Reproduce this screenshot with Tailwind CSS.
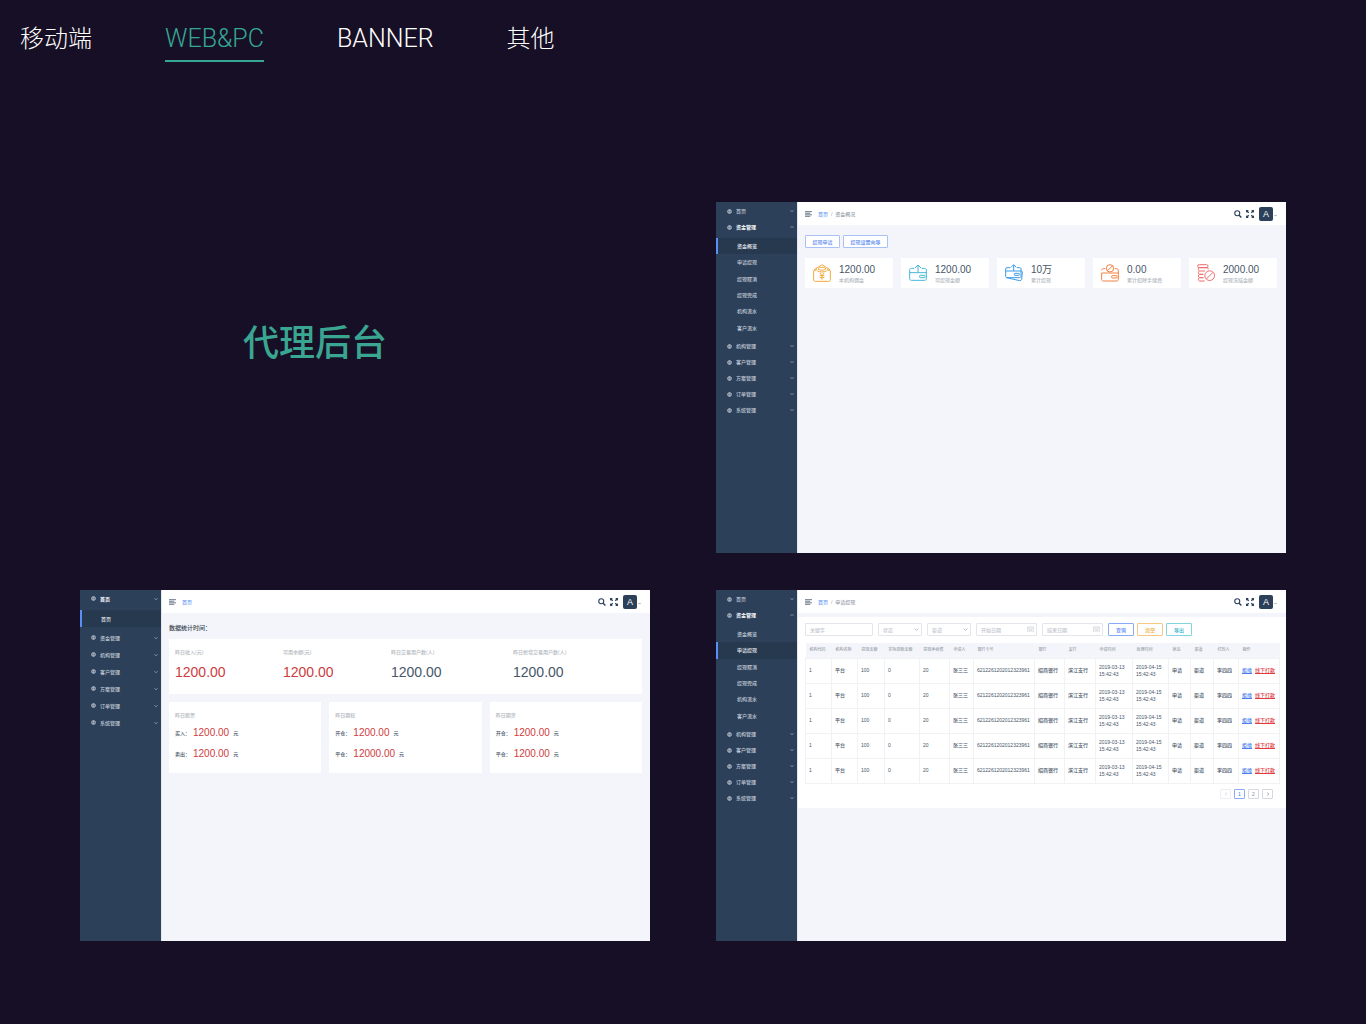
<!DOCTYPE html>
<html lang="zh-CN">
<head>
<meta charset="utf-8">
<meta name="viewport" content="width=device-width, initial-scale=1">
<title>代理后台</title>
<script src="https://cdn.jsdelivr.net/npm/@tailwindcss/browser@4"></script>
</head>
<body class="min-h-screen bg-[#170f25] font-['Liberation_Sans','Noto_Sans_CJK_SC',sans-serif] text-[#475669]">

<svg class="hidden" aria-hidden="true">
  <symbol id="i-globe" viewBox="0 0 10 10"><circle cx="5" cy="5" r="4" fill="#fff" fill-opacity=".25" stroke="currentColor" stroke-width="1.2"/><path d="M5 1v8M1.4 3.4h7.2M1.4 6.6h7.2" fill="none" stroke="currentColor" stroke-width=".8"/></symbol>
  <symbol id="i-down" viewBox="0 0 8 8"><path d="M1 2.5 4 5.5 7 2.5" fill="none" stroke="currentColor" stroke-width="1.6"/></symbol>
  <symbol id="i-up" viewBox="0 0 8 8"><path d="M1 5.5 4 2.5 7 5.5" fill="none" stroke="currentColor" stroke-width="1.6"/></symbol>
  <symbol id="i-menu" viewBox="0 0 12 10"><path d="M0 1h12M0 3.7h9M0 6.4h12M0 9h9" fill="none" stroke="currentColor" stroke-width="1.5"/></symbol>
  <symbol id="i-search" viewBox="0 0 16 16"><circle cx="6.500" cy="6.500" r="5" fill="none" stroke="currentColor" stroke-width="2.2"/><path d="m10.3 10.3 4.5 4.5" stroke="currentColor" stroke-width="2.8"/></symbol>
  <symbol id="i-full" viewBox="0 0 16 16"><path d="M0 0h5.5L3.8 1.9 6.4 4.5 4.5 6.4 1.9 3.8 0 5.5zM16 0h-5.5l1.7 1.9-2.6 2.6 1.9 1.9 2.6-2.6L16 5.5zM0 16h5.5l-1.7-1.9 2.6-2.6-1.9-1.9-2.6 2.6L0 10.5zM16 16h-5.5l1.7-1.9-2.6-2.6 1.9-1.9 2.6 2.6 1.9-1.7z" fill="currentColor"/></symbol>
  <symbol id="i-cal" viewBox="0 0 14 12"><path d="M1 2h12v9.5H1zM1 4.5h12M4 .5v2M10 .5v2M3 7h8M3 9h8" fill="none" stroke="currentColor" stroke-width=".8"/></symbol>
  <symbol id="i-envelope" viewBox="0 0 54 54"><g fill="none" stroke="currentColor" stroke-width="3"><path d="M10 19H4c-1.500 0-2 1-2 2v26c0 3 2 5 5 5h40c3 0 5-2 5-5V21c0-1-.5-2-2-2h-6"/><path d="m3 18 8-7M51 18l-8-7M10 19v-3c0-2 1-4 3-5l11-7c2-1.500 4-1.500 6 0l11 7c2 1 3 3 3 5v3"/><path d="M15 15c4-7 20-7 24 0M13 21c7 4 21 4 28 0M15 15c6 5 18 5 24 0"/><path d="m21 27 6 8 6-8M20 35h14M20 41h14M27 35v12"/></g></symbol>
  <symbol id="i-cardup" viewBox="0 0 54 54"><g fill="none" stroke="currentColor" stroke-width="3"><path d="M16 13H7c-3 0-5 2-5 5v26c0 3 2 5 5 5h40c3 0 5-2 5-5V18c0-3-2-5-5-5h-9M2 26h50M27 25V4M18 12l9-9 9 9"/><rect x="32" y="34" width="16" height="7" rx="2"/></g></symbol>
  <symbol id="i-cards" viewBox="0 0 54 54"><g fill="none" stroke="currentColor" stroke-width="3"><path d="M16 11H6c-2.500 0-4 2-4 4v22c0 3 2 4 4 4h37c3 0 5-2 5-4V15c0-3-2-4-5-4h-7M2 21h46M26 21V3M18 10l8-8 8 8M4 41l40 9c3 .5 5-1 6-3l2-24-4-3"/><rect x="28" y="28" width="15" height="6" rx="2"/></g></symbol>
  <symbol id="i-cardban" viewBox="0 0 54 54"><g fill="none" stroke="currentColor" stroke-width="3"><path d="M13 14H7c-3 0-5 2-5 5M2 27v19c0 3 2 5 5 5h40c3 0 5-2 5-5V19c0-3-2-5-5-5h-6M2 27h50"/><circle cx="27" cy="13" r="11"/><path d="m20 20 15-15"/><rect x="32" y="35" width="16" height="7" rx="2"/></g></symbol>
  <symbol id="i-coinsban" viewBox="0 0 54 54"><g fill="none" stroke="currentColor" stroke-width="3"><rect x="2" y="2" width="31" height="9" rx="4.500"/><path d="M30 11c3 1 4 3 4 5M7 11c-4 2-4 8 0 10h17M7 21c-4 2-4 8 0 10h12M7 31c-4 2-4 8 0 10h12M7 41c-4 1-4 9 0 10h16M7 11h24M7 31h12M7 41h12"/><circle cx="38" cy="35" r="14.500"/><path d="m28 45 20-20"/></g></symbol>
</svg>

<nav class="flex gap-[73px] px-5 pt-[21px] text-[24px] leading-9 font-light text-white font-['Roboto','Noto_Sans_CJK_SC',sans-serif]">
  <a href="#" class="pb-[3px]">移动端</a>
  <a href="#" class="border-b-2 border-[#35a794] pb-[3px] text-[25px] text-[#35a794]">WEB&amp;PC</a>
  <a href="#" class="pb-[3px] text-[25px]">BANNER</a>
  <a href="#" class="pb-[3px]">其他</a>
</nav>

<main class="grid grid-cols-2 gap-x-[66px] gap-y-[37px] px-20 pt-[140px] pb-20 text-[5px] leading-[8px] font-medium">
  <h1 class="pt-[122px] pl-[163px] text-[36px] leading-10 font-medium text-[#3aa692]">代理后台</h1>

  <!-- 资金概况 -->
  <section class="flex min-h-[351px] bg-[#f4f5fa]">
    <aside data-menu="资金管理" data-active="资金概览" class="w-[81px] shrink-0 bg-[#2c405a] pt-px text-[#c3cbd6]"></aside>
    <div class="min-w-0 flex-1 border-l border-[#e3e7ef]">
      <header data-crumb="资金概况" class="flex h-[23px] items-center bg-white pr-[9px] pl-[7px]"></header>
      <div class="pt-[10px] pr-[9px] pl-[7px]">
        <div class="flex gap-[3px]">
          <button class="h-[13px] w-[35px] rounded-[1px] border border-[#a9c1f5] bg-white text-[#5b8bf0]">提现申请</button>
          <button class="h-[13px] w-[45px] rounded-[1px] border border-[#a9c1f5] bg-white text-[#5b8bf0]">提现设置向导</button>
        </div>
        <div class="mt-[10px] grid grid-cols-5 gap-2">
          <div class="flex h-[30px] items-center gap-2 bg-white pl-2"><svg class="size-[18px] text-[#efa93c]"><use href="#i-envelope"/></svg><div><p class="pt-[2px] text-[10px] leading-[12px]">1200.00</p><p class="text-[#b3b8c0]">本机构佣金</p></div></div>
          <div class="flex h-[30px] items-center gap-2 bg-white pl-2"><svg class="size-[18px] text-[#45b8d6]"><use href="#i-cardup"/></svg><div><p class="pt-[2px] text-[10px] leading-[12px]">1200.00</p><p class="text-[#b3b8c0]">可提现金额</p></div></div>
          <div class="flex h-[30px] items-center gap-2 bg-white pl-2"><svg class="size-[18px] text-[#3c9be8]"><use href="#i-cards"/></svg><div><p class="pt-[2px] text-[10px] leading-[12px] font-normal">10万</p><p class="text-[#b3b8c0]">累计提现</p></div></div>
          <div class="flex h-[30px] items-center gap-2 bg-white pl-2"><svg class="size-[18px] text-[#f08142]"><use href="#i-cardban"/></svg><div><p class="pt-[2px] text-[10px] leading-[12px]">0.00</p><p class="text-[#b3b8c0]">累计扣除手续费</p></div></div>
          <div class="flex h-[30px] items-center gap-2 bg-white pl-2"><svg class="size-[18px] text-[#f26d6d]"><use href="#i-coinsban"/></svg><div><p class="pt-[2px] text-[10px] leading-[12px]">2000.00</p><p class="text-[#b3b8c0]">提现冻结金额</p></div></div>
        </div>
      </div>
    </div>
  </section>

  <!-- 首页 -->
  <section class="flex min-h-[351px] bg-[#f4f5fa]">
    <aside data-menu="首页" data-active="首页" class="w-[81px] shrink-0 bg-[#2c405a] text-[#c3cbd6]"></aside>
    <div class="min-w-0 flex-1 border-l border-[#e3e7ef]">
      <header data-crumb="" class="flex h-[23px] items-center bg-white pr-[9px] pl-[7px]"></header>
      <div class="pt-[10px] pr-2 pl-[7px]">
        <h2 class="text-[6px] leading-[10px] text-[#333f4d]">数据统计时间：</h2>
        <div class="mt-[6px] grid h-[55px] grid-cols-[108px_108px_122px_1fr] bg-white pt-[9px] pl-[6px]">
          <div><p class="text-[#b3b8c0]">昨日收入(元)</p><p class="pt-2 text-[14px] leading-4 text-[#cf3c40]">1200.00</p></div>
          <div><p class="text-[#b3b8c0]">可用余额(元)</p><p class="pt-2 text-[14px] leading-4 text-[#cf3c40]">1200.00</p></div>
          <div><p class="text-[#b3b8c0]">昨日交易用户数(人)</p><p class="pt-2 text-[14px] leading-4">1200.00</p></div>
          <div><p class="text-[#b3b8c0]">昨日新增交易用户数(人)</p><p class="pt-2 text-[14px] leading-4">1200.00</p></div>
        </div>
        <div class="mt-2 grid grid-cols-3 gap-2">
          <div class="h-[71px] bg-white pt-[9px] pl-[6px]"><p class="pb-[7px] text-[#b3b8c0]">昨日股票</p>
            <p class="flex items-center leading-[14px]"><span class="w-[18px]">买入：</span><b class="text-[10px] font-normal text-[#cf3c40]">1200.00</b><span class="pl-1">元</span></p>
            <p class="flex items-center pt-[7px] leading-[14px]"><span class="w-[18px]">卖出：</span><b class="text-[10px] font-normal text-[#cf3c40]">1200.00</b><span class="pl-1">元</span></p></div>
          <div class="h-[71px] bg-white pt-[9px] pl-[6px]"><p class="pb-[7px] text-[#b3b8c0]">昨日期权</p>
            <p class="flex items-center leading-[14px]"><span class="w-[18px]">开仓：</span><b class="text-[10px] font-normal text-[#cf3c40]">1200.00</b><span class="pl-1">元</span></p>
            <p class="flex items-center pt-[7px] leading-[14px]"><span class="w-[18px]">平仓：</span><b class="text-[10px] font-normal text-[#cf3c40]">12000.00</b><span class="pl-1">元</span></p></div>
          <div class="h-[71px] bg-white pt-[9px] pl-[6px]"><p class="pb-[7px] text-[#b3b8c0]">昨日期货</p>
            <p class="flex items-center leading-[14px]"><span class="w-[18px]">开仓：</span><b class="text-[10px] font-normal text-[#cf3c40]">1200.00</b><span class="pl-1">元</span></p>
            <p class="flex items-center pt-[7px] leading-[14px]"><span class="w-[18px]">平仓：</span><b class="text-[10px] font-normal text-[#cf3c40]">1200.00</b><span class="pl-1">元</span></p></div>
        </div>
      </div>
    </div>
  </section>

  <!-- 申请提现 -->
  <section class="flex min-h-[351px] bg-[#f4f5fa]">
    <aside data-menu="资金管理" data-active="申请提现" class="w-[81px] shrink-0 bg-[#2c405a] pt-px text-[#c3cbd6]"></aside>
    <div class="min-w-0 flex-1 border-l border-[#e3e7ef]">
      <header data-crumb="申请提现" class="flex h-[23px] items-center bg-white pr-[9px] pl-[7px]"></header>
      <div class="mt-1 bg-white pt-[6px] pr-[7px] pb-[9px] pl-[7px]">
        <form class="flex gap-[5px] text-[#b9bec8]">
          <input aria-label="关键字" placeholder="关键字" class="h-[13px] w-[68px] rounded-[1px] border border-[#e3e5ea] px-1 placeholder:text-[#c3c7cf]">
          <label class="relative"><select aria-label="状态" class="h-[13px] w-[44px] appearance-none rounded-[1px] border border-[#e3e5ea] bg-white px-1 text-[#c3c7cf]"><option>状态</option></select><svg class="absolute top-1 right-[3px] size-[5px]"><use href="#i-down"/></svg></label>
          <label class="relative"><select aria-label="渠道" class="h-[13px] w-[44px] appearance-none rounded-[1px] border border-[#e3e5ea] bg-white px-1 text-[#c3c7cf]"><option>渠道</option></select><svg class="absolute top-1 right-[3px] size-[5px]"><use href="#i-down"/></svg></label>
          <label class="relative"><input aria-label="开始日期" placeholder="开始日期" class="h-[13px] w-[61px] rounded-[1px] border border-[#e3e5ea] px-1 placeholder:text-[#c3c7cf]"><svg class="absolute top-[3px] right-[3px] h-[6px] w-[7px]"><use href="#i-cal"/></svg></label>
          <label class="relative"><input aria-label="结束日期" placeholder="结束日期" class="h-[13px] w-[61px] rounded-[1px] border border-[#e3e5ea] px-1 placeholder:text-[#c3c7cf]"><svg class="absolute top-[3px] right-[3px] h-[6px] w-[7px]"><use href="#i-cal"/></svg></label>
          <div class="flex gap-[3px]">
            <button type="button" class="h-[13px] w-[26px] rounded-[1px] border border-[#8aabf5] text-[#4a7df0]">查询</button>
            <button type="button" class="h-[13px] w-[26px] rounded-[1px] border border-[#f5c983] text-[#f0a93a]">清空</button>
            <button type="button" class="h-[13px] w-[26px] rounded-[1px] border border-[#83d3e0] text-[#35b5cb]">导出</button>
          </div>
        </form>
        <table class="mt-[7px] w-full table-fixed border-collapse text-left">
          <colgroup><col class="w-[26px]"><col class="w-[26px]"><col class="w-[27px]"><col class="w-[35px]"><col class="w-[30px]"><col class="w-[24px]"><col class="w-[61px]"><col class="w-[30px]"><col class="w-[31px]"><col class="w-[37px]"><col class="w-[36px]"><col class="w-[22px]"><col class="w-[23px]"><col class="w-[25px]"><col class="w-[41px]"></colgroup>
          <thead class="bg-[#f4f5fa] text-[4px] whitespace-nowrap text-[#9aa1ab]"><tr id="head"></tr></thead>
          <tbody id="rows"></tbody>
        </table>
        <div class="mt-[5px] mr-[6px] flex justify-end gap-[3px] text-[#8a929d]">
          <button aria-label="上一页" class="grid h-[10px] w-[11px] place-items-center rounded-[1px] border border-[#eceef2] text-[#ccd0d6]"><svg class="size-[4px] rotate-90"><use href="#i-down"/></svg></button>
          <button class="h-[10px] w-[11px] rounded-[1px] border border-[#8aabf5] text-[#4a7df0]">1</button>
          <button class="h-[10px] w-[11px] rounded-[1px] border border-[#d5d8de]">2</button>
          <button aria-label="下一页" class="grid h-[10px] w-[11px] place-items-center rounded-[1px] border border-[#d5d8de]"><svg class="size-[4px] -rotate-90"><use href="#i-down"/></svg></button>
        </div>
      </div>
    </div>
  </section>
</main>

<script>
  const groups = ['首页', '资金管理', '机构管理', '客户管理', '方案管理', '订单管理', '系统管理'];
  const funds = ['资金概览', '申请提现', '提现取消', '提现完成', '机构流水', '客户流水'];

  document.querySelectorAll('aside').forEach(el => {
    const { menu, active } = el.dataset, home = menu === '首页';
    const subs = home ? ['首页'] : funds;
    el.innerHTML = groups.map(g => {
      const open = g === menu;
      const row = `<a href="#" class="flex items-center pr-[3px] pl-[11px] ${home ? 'h-[17px]' : 'h-[16px]'} ${open ? 'font-bold text-white' : ''}">
        <svg class="size-[5px] text-[#c3cbd6]"><use href="#i-globe"/></svg><span class="flex-1 pl-1">${g}</span>
        <svg class="size-[4px] text-[#a5b0be]"><use href="${open && !home ? '#i-up' : '#i-down'}"/></svg></a>`;
      if (!open) return row;
      const items = subs.map(s => `<a href="#" class="flex items-center border-l-2 pl-[19px] ${s === active ? 'border-[#5b8ff5] bg-[#27394f] text-[#e6eaf0]' : 'border-transparent'}">${s}</a>`).join('');
      return row + `<div class="pt-[3px] pb-[2px]"><div class="grid auto-rows-fr ${home ? 'h-[17px]' : 'h-[98px]'}">${items}</div></div>`;
    }).join('');
  });

  document.querySelectorAll('header').forEach(el => {
    const crumb = el.dataset.crumb;
    el.innerHTML = `<svg class="mr-[6px] h-[6px] w-[7px] text-[#5d6a7b]"><use href="#i-menu"/></svg>
      <a href="#" class="text-[#6b9bf5]">首页</a>
      <span class="flex-1 pl-[3px] text-[#9aa1ab]">${crumb ? '/&nbsp; ' + crumb : ''}</span>
      <button aria-label="搜索" class="mr-1 text-[#2c405a]"><svg class="size-2"><use href="#i-search"/></svg></button>
      <button aria-label="全屏" class="mr-[5px] text-[#2c405a]"><svg class="size-2"><use href="#i-full"/></svg></button>
      <button class="size-[14px] rounded-[2px] bg-[#2c405a] text-[9px] leading-[14px] text-white">A</button>
      <svg class="mt-1 ml-px size-[3px] text-[#5d6a7b]"><use href="#i-down"/></svg>`;
  });

  document.getElementById('head').innerHTML =
    ['机构代码', '机构名称', '提现金额', '实际到账金额', '提现手续费', '申请人', '银行卡号', '银行', '支行', '申请时间', '处理时间', '状态', '渠道', '打款人', '操作']
      .map(t => `<th class="h-[15px] pl-[4px] font-medium">${t}</th>`).join('');

  const cells = ['1', '平台', '100', '0', '20', '张三三', '6212261202012323961', '招商银行', '滨江支行', '2019-03-13<br>15:42:43', '2019-04-15<br>15:42:43', '申请', '渠道', '李四四',
    '<a href="#" class="mr-[3px] text-[#4a7df0] underline">拒绝</a><a href="#" class="text-[#e03b3f] underline">线下打款</a>'];
  document.getElementById('rows').innerHTML = Array(5).fill(
    `<tr>${cells.map(c => `<td class="h-[25px] border border-[#f1f2f5] pl-[3px] leading-[7px] whitespace-nowrap">${c}</td>`).join('')}</tr>`).join('');
</script>
</body>
</html>
